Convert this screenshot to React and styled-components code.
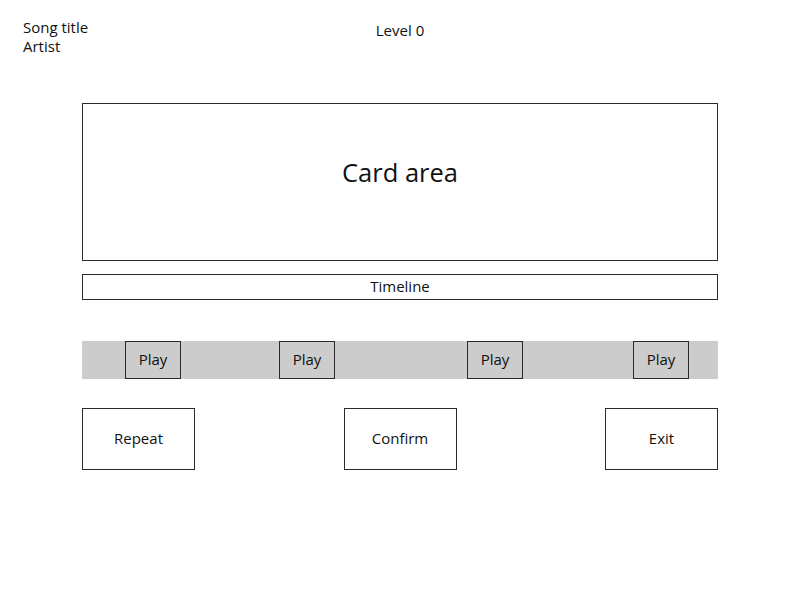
import React from "react"
import styled, { createGlobalStyle } from "styled-components"

const GlobalStyle = createGlobalStyle`
  body {
    margin: 0;
    background: #fff;
    font-family: "Open Sans", "Noto Sans", sans-serif;
    color: #111;
  }
`

const Page = styled.div`
  width: 800px;
  height: 600px;
  box-sizing: border-box;
`

const Header = styled.header`
  display: grid;
  grid-template-columns: 1fr auto 1fr;
  padding: 18px 23px 0;
  font-size: 15px;
  line-height: 19px;
`

const SongInfo = styled.div`
  display: flex;
  flex-direction: column;
`

const Level = styled.div`
  padding-top: 3px;
`

const Main = styled.main`
  width: 636px;
  margin: 47px auto 0;
  display: flex;
  flex-direction: column;
`

const CardArea = styled.div`
  height: 158px;
  box-sizing: border-box;
  border: 1px solid #2a2a2a;
  display: flex;
  align-items: center;
  justify-content: center;
  font-size: 25.5px;
  padding-bottom: 20px;
`

const Timeline = styled.div`
  margin-top: 13px;
  height: 26px;
  box-sizing: border-box;
  border: 1px solid #2a2a2a;
  display: flex;
  align-items: center;
  justify-content: center;
  font-size: 15px;
  padding-bottom: 3px;
`

const Strip = styled.div`
  position: relative;
  margin-top: 41px;
  height: 38px;
  background: #cccccc;
`

const PlayButton = styled.button`
  position: absolute;
  top: 0;
  width: 56px;
  height: 38px;
  box-sizing: border-box;
  border: 1px solid #2a2a2a;
  background: #cccccc;
  font-family: inherit;
  font-size: 15px;
  color: #111;
  padding: 0 0 2px;
`

const Actions = styled.div`
  margin-top: 29px;
  display: flex;
  justify-content: space-between;
`

const ActionButton = styled.button`
  width: 113px;
  height: 62px;
  box-sizing: border-box;
  border: 1px solid #2a2a2a;
  background: #fff;
  font-family: inherit;
  font-size: 15px;
  color: #111;
  padding: 0 0 2px;
`

const plays = [43, 197, 385, 551]

const App = () => (
  <Page>
    <GlobalStyle />
    <Header>
      <SongInfo>
        <span>Song title</span>
        <span>Artist</span>
      </SongInfo>
      <Level>Level 0</Level>
      <div />
    </Header>
    <Main>
      <CardArea>Card area</CardArea>
      <Timeline>Timeline</Timeline>
      <Strip>
        {plays.map((left) => (
          <PlayButton key={left} style={{ left }}>Play</PlayButton>
        ))}
      </Strip>
      <Actions>
        <ActionButton>Repeat</ActionButton>
        <ActionButton>Confirm</ActionButton>
        <ActionButton>Exit</ActionButton>
      </Actions>
    </Main>
  </Page>
)

export default App
